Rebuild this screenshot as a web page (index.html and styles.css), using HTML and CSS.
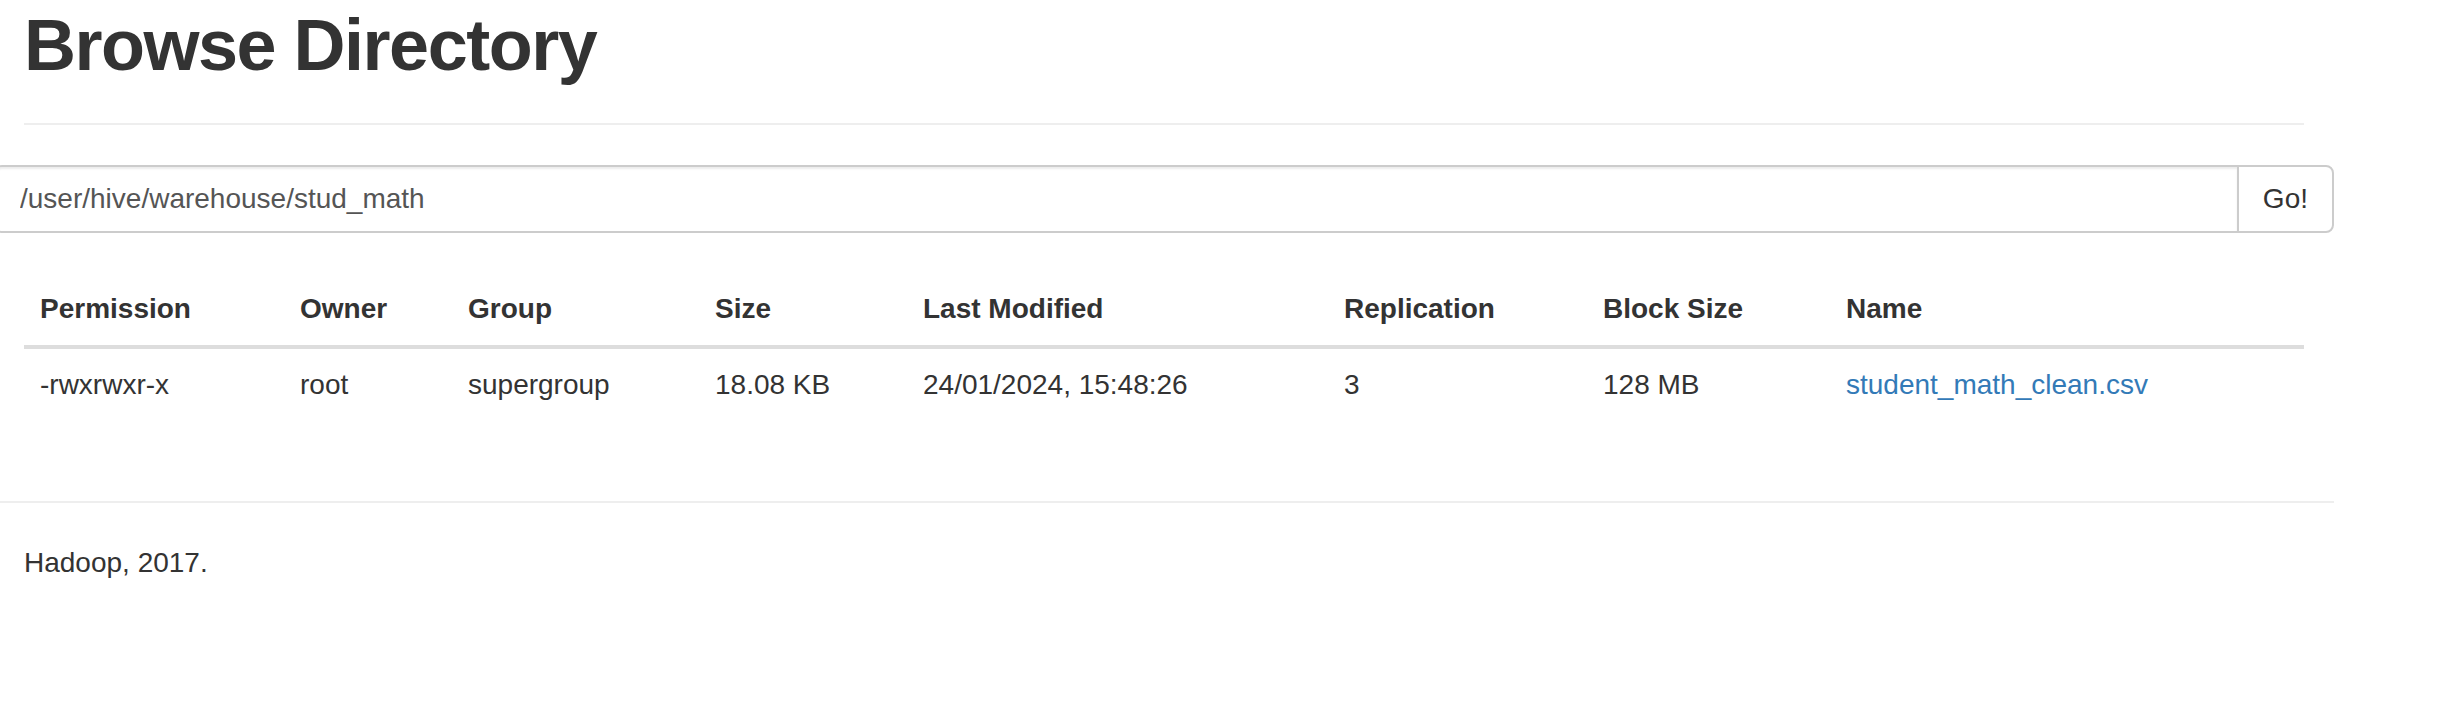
FILE: index.html
```html
<!DOCTYPE html>
<html lang="en">
<head>
<meta charset="utf-8">
<title>Browsing HDFS</title>
<link rel="stylesheet" href="styles.css">
</head>
<body>
<div class="container">
  <div class="page-header">
    <h1 class="title">Browse Directory</h1>
  </div>
  <div class="row">
    <form class="nav-form" onsubmit="return false;">
      <div class="input-group">
        <input type="text" class="form-control" value="/user/hive/warehouse/stud_math">
        <button class="btn" type="button">Go!</button>
      </div>
    </form>
  </div>
  <div class="spacer"></div>
  <div class="panel">
    <table class="table">
      <colgroup>
        <col class="c-perm">
        <col class="c-owner">
        <col class="c-group">
        <col class="c-size">
        <col class="c-mod">
        <col class="c-rep">
        <col class="c-block">
        <col class="c-name">
      </colgroup>
      <thead>
        <tr>
          <th>Permission</th>
          <th>Owner</th>
          <th>Group</th>
          <th>Size</th>
          <th>Last Modified</th>
          <th>Replication</th>
          <th>Block Size</th>
          <th>Name</th>
        </tr>
      </thead>
      <tbody>
        <tr>
          <td>-rwxrwxr-x</td>
          <td>root</td>
          <td>supergroup</td>
          <td>18.08 KB</td>
          <td>24/01/2024, 15:48:26</td>
          <td>3</td>
          <td>128 MB</td>
          <td><a class="file-link" href="#">student_math_clean.csv</a></td>
        </tr>
      </tbody>
    </table>
  </div>
  <div class="row">
    <hr class="footer-rule">
    <div class="footer-col">
      <p class="footer-text">Hadoop, 2017.</p>
    </div>
  </div>
</div>
</body>
</html>
```

FILE: styles.css
```css
* {
  box-sizing: border-box;
}

html, body {
  margin: 0;
  padding: 0;
  background: #fff;
}

body {
  font-family: "Liberation Sans", Arial, Helvetica, sans-serif;
  font-size: 28px;
  line-height: 40px;
  color: #333;
  overflow: hidden;
}

.container {
  width: 2340px;
  margin-left: -6px;
  padding: 0 30px;
}

.page-header {
  margin: 0 0 40px;
  padding-bottom: 18px;
  border-bottom: 2px solid #eee;
}

.title {
  margin: 6px 0 20px;
  font-size: 72px;
  line-height: 1.1;
  font-weight: 700;
  letter-spacing: -1.5px;
  color: #333;
}

.row {
  margin: 0 -30px;
}

.nav-form {
  margin: 0;
}

.input-group {
  display: flex;
  height: 68px;
}

.form-control {
  flex: 1;
  min-width: 0;
  height: 68px;
  margin: 0;
  padding: 12px 24px;
  font-family: inherit;
  font-size: 28px;
  line-height: 40px;
  color: #555;
  background: #fff;
  border: 2px solid #ccc;
  border-radius: 8px 0 0 8px;
  box-shadow: inset 0 2px 2px rgba(0, 0, 0, 0.075);
  outline: none;
}

.btn {
  height: 68px;
  margin: 0 0 0 -2px;
  padding: 12px 24px;
  font-family: inherit;
  font-size: 28px;
  line-height: 40px;
  color: #333;
  background: #fff;
  border: 2px solid #ccc;
  border-radius: 0 8px 8px 0;
}

.spacer {
  height: 40px;
}

.table {
  width: 100%;
  border-collapse: collapse;
  border-spacing: 0;
  margin-bottom: 80px;
}

.c-perm { width: 260px; }
.c-owner { width: 168px; }
.c-group { width: 247px; }
.c-size { width: 208px; }
.c-mod { width: 421px; }
.c-rep { width: 259px; }
.c-block { width: 243px; }
.c-name { width: 474px; }

.table th {
  text-align: left;
  font-weight: 700;
  padding: 16px;
  line-height: 40px;
  vertical-align: bottom;
  border-bottom: 4px solid #ddd;
}

.table td {
  padding: 16px;
  line-height: 40px;
  vertical-align: top;
  border-top: 2px solid #ddd;
}

.file-link {
  color: #337ab7;
  text-decoration: none;
}

.footer-rule {
  margin: 40px 0;
  height: 0;
  border: 0;
  border-top: 2px solid #eee;
}

.footer-col {
  padding: 0 30px;
}

.footer-text {
  margin: 0 0 20px;
}
```
